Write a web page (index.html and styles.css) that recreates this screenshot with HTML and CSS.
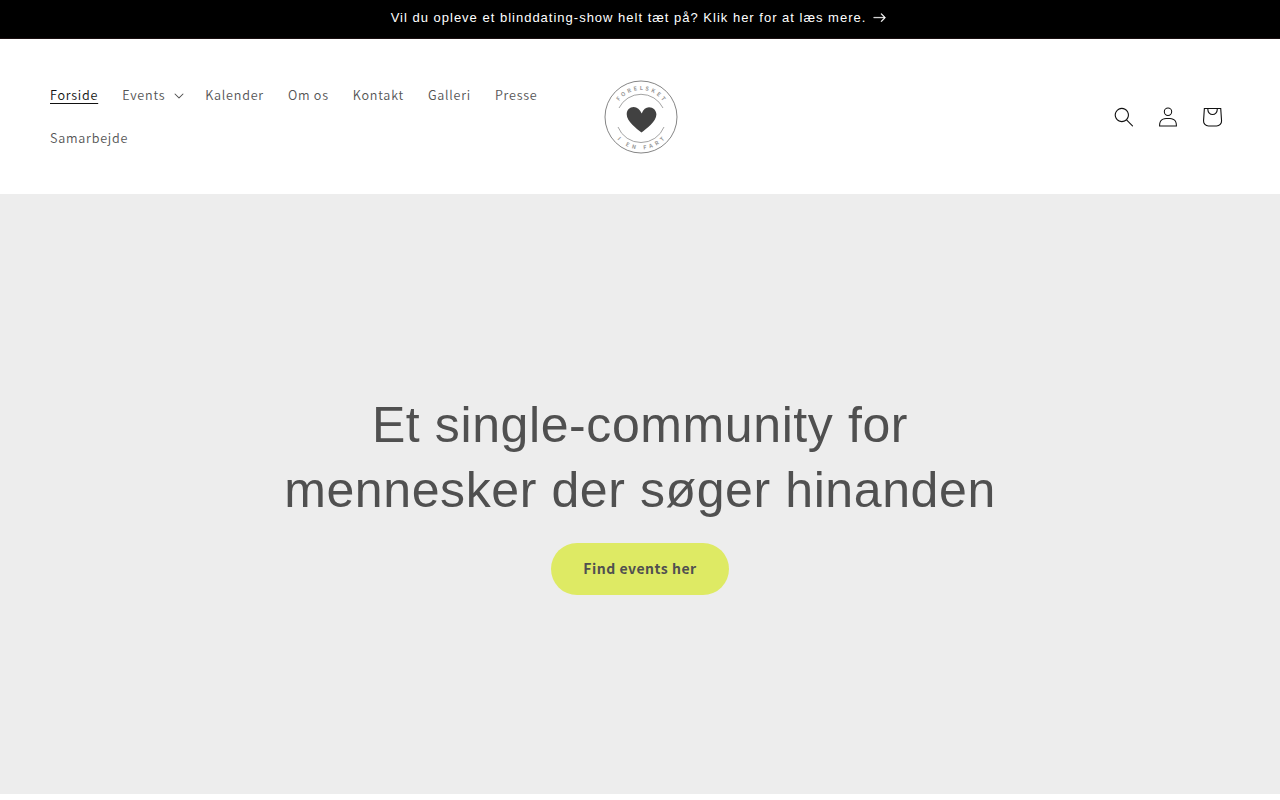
FILE: index.html
```html
<!DOCTYPE html>
<html lang="da">
<head>
    <meta charset="UTF-8">
    <title>Forelsket i en fart</title>
    <link rel="stylesheet" href="styles.css">
</head>
<body>

<div class="announcement">
    <a href="#" class="announcement-link">
        <span>Vil du opleve et blinddating-show helt tæt på? Klik her for at læs mere.</span>
        <svg class="icon-arrow" viewBox="0 0 14 10"><path fill-rule="evenodd" d="M8.537.808a.5.5 0 01.817-.162l4 4a.5.5 0 010 .708l-4 4a.5.5 0 11-.708-.708L11.793 5.5H1a.5.5 0 010-1h10.793L8.646 1.354a.5.5 0 01-.109-.546z"/></svg>
    </a>
</div>

<header class="header">
    <nav>
        <ul class="menu">
            <li><a href="#" class="active"><span>Forside</span></a></li>
            <li>
                <a href="#"><span>Events</span>
                    <svg class="icon-caret" viewBox="0 0 10 6"><path fill-rule="evenodd" d="M9.354.646a.5.5 0 00-.708 0L5 4.293 1.354.646a.5.5 0 00-.708.708l4 4a.5.5 0 00.708 0l4-4a.5.5 0 000-.708z"/></svg>
                </a>
            </li>
            <li><a href="#"><span>Kalender</span></a></li>
            <li><a href="#"><span>Om os</span></a></li>
            <li><a href="#"><span>Kontakt</span></a></li>
            <li><a href="#"><span>Galleri</span></a></li>
            <li><a href="#"><span>Presse</span></a></li>
            <li><a href="#"><span>Samarbejde</span></a></li>
        </ul>
    </nav>

    <a href="#" class="logo">
        <svg viewBox="0 0 90 90">
            <defs>
                <path id="arc-top" d="M18 45a27 27 0 0 1 54 0"/>
                <path id="arc-bottom" d="M12.5 45a32.5 32.5 0 0 0 65 0"/>
            </defs>
            <circle class="logo-ring" cx="45" cy="45" r="36"/>
            <path class="logo-arc" d="M23 36a24.5 24.5 0 0 1 44 0M22 55a24.8 24.8 0 0 0 46 0"/>
            <path class="logo-heart" d="M45.5 60.5C41 57 30.7 49.5 30.7 42.3c0-4.3 3-7.3 7-7.3 3.4 0 6.2 2.2 8 6.5 1.6-4.3 4.2-6.3 7.3-6.3 4.2 0 7.4 3.1 7.4 7.4 0 6.7-10 14.4-14.9 17.9z"/>
            <text class="logo-text"><textPath href="#arc-top" startOffset="50%" textLength="51">FORELSKET</textPath></text>
            <text class="logo-text"><textPath href="#arc-bottom" startOffset="50%" textLength="53">I EN FART</textPath></text>
        </svg>
    </a>

    <div class="header-icons">
        <a href="#" class="header-icon"><svg class="icon" viewBox="0 0 18 19"><path fill-rule="evenodd" d="M11.03 11.68A5.784 5.784 0 112.85 3.5a5.784 5.784 0 018.18 8.18zm.26 1.12a6.78 6.78 0 11.72-.7l5.4 5.4a.5.5 0 11-.71.7l-5.41-5.4z"/></svg></a>
        <a href="#" class="header-icon"><svg class="icon" viewBox="0 0 18 19"><path fill-rule="evenodd" d="M6 4.5a3 3 0 116 0 3 3 0 01-6 0zm3-4a4 4 0 100 8 4 4 0 000-8zm5.58 12.15c1.12.82 1.83 2.24 1.91 4.85H1.51c.08-2.6.79-4.03 1.9-4.85C4.66 11.75 6.5 11.5 9 11.5s4.35.26 5.58 1.15zM9 10.5c-2.5 0-4.65.24-6.17 1.35C1.27 12.98.5 14.93.5 18v.5h17V18c0-3.07-.77-5.02-2.33-6.15-1.52-1.1-3.67-1.35-6.17-1.35z"/></svg></a>
        <a href="#" class="header-icon"><svg class="icon-cart" viewBox="0 0 40 40"><path fill-rule="evenodd" d="M15.75 11.8h-3.16l-.77 11.6a5 5 0 004.99 5.34h7.38a5 5 0 004.99-5.33L28.4 11.8zm0 1h-2.22l-.71 10.67a4 4 0 003.99 4.27h7.38a4 4 0 004-4.27l-.72-10.67h-2.22v.63a4.75 4.75 0 11-9.5 0zm8.5 0h-7.5v.63a3.75 3.75 0 107.5 0z"/></svg></a>
    </div>
</header>

<main class="banner">
    <div class="banner-box">
        <h2>Et single-community for mennesker der søger hinanden</h2>
        <a href="#" class="button">Find events her</a>
    </div>
</main>

</body>
</html>
```
FILE: styles.css
```css
*{
    box-sizing: border-box;
}
body{
    margin: 0;
    background: #fff;
    color: #505050;
    font-family: "Noto Sans CJK SC", "Noto Sans", sans-serif;
}
a{
    color: inherit;
    text-decoration: none;
}
svg{
    display: block;
}

.announcement{
    height: 39px;
    background: #000;
    border-bottom: 1px solid #1a0f10;
    color: #fff;
}
.announcement-link{
    display: flex;
    justify-content: center;
    align-items: center;
    height: 35px;
    font: 13px/15px "Liberation Sans", Arial, sans-serif;
    letter-spacing: 1px;
}
.icon-arrow{
    width: 13px;
    margin: 0 3px 0 7px;
    fill: #fff;
    stroke: #fff;
    stroke-width: 0.3;
}

.header{
    display: grid;
    grid-template-columns: 1fr 90px 1fr;
    align-items: center;
    height: 155px;
    padding: 0 46px 0 38px;
}
.menu{
    display: flex;
    flex-wrap: wrap;
    margin: 0;
    padding: 0;
    list-style: none;
}
.menu a{
    display: flex;
    align-items: center;
    height: 43px;
    padding: 0 12px 2px;
    font-size: 12.6px;
    font-weight: 350;
    letter-spacing: 0.76px;
    color: #555;
}
.menu .active{
    color: #111;
}
.menu .active span{
    text-decoration: underline;
    text-underline-offset: 3px;
}
.icon-caret{
    width: 10px;
    margin: 3px -3px 0 9px;
    fill: #4d4d4d;
}

.logo svg{
    width: 90px;
    height: 90px;
    margin-left: 5px;
}
.logo-ring,
.logo-arc{
    fill: none;
    stroke: #777;
    stroke-width: 0.9;
}
.logo-arc{
    stroke: #999;
}
.logo-heart{
    fill: #414141;
}
.logo-text{
    font: bold 5.5px "Noto Sans CJK SC", sans-serif;
    text-anchor: middle;
    fill: #999;
}

.header-icons{
    display: flex;
    justify-content: flex-end;
}
.header-icon{
    display: flex;
    justify-content: center;
    align-items: center;
    width: 44px;
    height: 44px;
    fill: #111;
}
.icon{
    width: 20px;
    height: 20px;
}
.icon-cart{
    width: 44px;
    height: 44px;
}

.banner{
    display: flex;
    justify-content: center;
    align-items: center;
    height: 600px;
    background: #ededed;
}
.banner-box{
    width: 720px;
    text-align: center;
}
.banner h2{
    margin: 0 0 20px;
    font: 50px/65px "Liberation Sans", Arial, sans-serif;
    letter-spacing: 0.6px;
}
.button{
    display: inline-flex;
    justify-content: center;
    align-items: center;
    width: 178px;
    height: 52px;
    padding-bottom: 2px;
    border-radius: 26px;
    background: #deea64;
    font-size: 14px;
    font-weight: 700;
    letter-spacing: 0.5px;
}
```
